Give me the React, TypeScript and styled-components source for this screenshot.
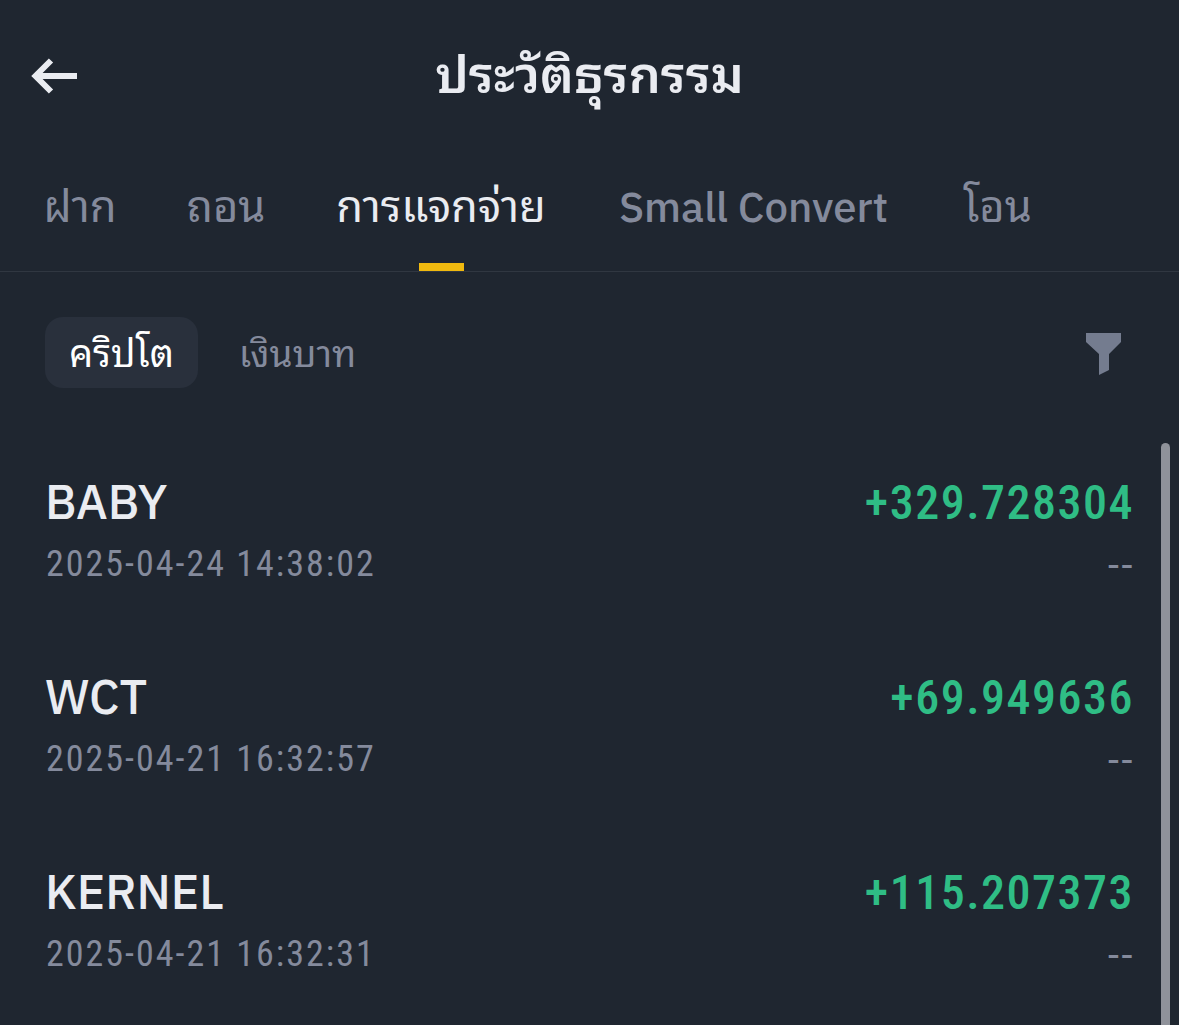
import * as React from 'react';
import styled, { createGlobalStyle } from 'styled-components';

const colors = {
  background: '#1f2630',
  panel: '#29303c',
  line: '#303741',
  text: '#eaecf1',
  white: '#ffffff',
  muted: '#848a9c',
  filter: '#747c8f',
  scroll: '#8f929a',
  green: '#2fbd85',
  yellow: '#f0b90f',
};

const GlobalStyle = createGlobalStyle`
  body {
    margin: 0;
    background: ${colors.background};
    font-family: 'IBM Plex Sans', 'Noto Sans Thai Looped', Roboto, sans-serif;
  }
`;
const Screen = styled.div`
  display: flex;
  flex-direction: column;
  height: 1025px;
  overflow: hidden;
  background: ${colors.background};
  color: ${colors.text};
`;
const Header = styled.header`
  display: grid;
  grid-template-columns: 80px 1fr 80px;
  align-items: center;
  flex: none;
  height: 152px;
`;
const BackButton = styled.button`
  display: flex;
  padding: 0 0 0 30px;
  border: 0;
  background: none;
  color: inherit;
`;
const Title = styled.h1`
  margin: 0;
  padding-bottom: 5px;
  font-size: 51px;
  line-height: 80px;
  font-weight: 600;
  text-align: center;
  white-space: nowrap;
`;
const Tabs = styled.nav`
  display: flex;
  gap: 75px;
  flex: none;
  height: 119px;
  padding-left: 45px;
  border-bottom: 1px solid ${colors.line};
`;
const Tab = styled.div<{ $active: boolean; $width: number }>`
  display: flex;
  flex-direction: column;
  align-items: center;
  justify-content: space-between;
  width: ${props => props.$width}px;
  color: ${props => props.$active ? colors.text : colors.muted};
  white-space: nowrap;

  &::after {
    content: '';
    width: 45px;
    height: 8px;
    background: ${props => props.$active ? colors.yellow : 'transparent'};
  }
`;
const TabLabel = styled.span<{ $latin?: boolean }>`
  padding-top: ${props => props.$latin ? 25 : 24}px;
  font-size: ${props => props.$latin ? 42 : 43.5}px;
  line-height: 60px;
  font-weight: ${props => props.$latin ? 500 : 400};
`;
const Toolbar = styled.div`
  display: flex;
  align-items: center;
  flex: none;
  height: 71px;
  padding: 45px 57px 55px 45px;
`;
const Currency = styled.div<{ $active: boolean }>`
  width: 153px;
  height: 71px;
  margin-right: 23px;
  border-radius: 18px;
  background: ${props => props.$active ? colors.panel : 'transparent'};
  color: ${props => props.$active ? colors.white : colors.muted};
  font-size: ${props => props.$active ? 38 : 37}px;
  line-height: 72px;
  text-align: center;
  white-space: nowrap;
`;
const FilterButton = styled.button`
  display: flex;
  margin-left: auto;
  padding: 2px 0 0;
  border: 0;
  background: none;
  color: ${colors.filter};
`;
const List = styled.main`
  position: relative;
  flex: 1;
  min-height: 0;
  padding: 29px 46px 0;
`;
const Row = styled.div`
  display: flex;
  justify-content: space-between;
  height: 195px;
`;
const Column = styled.div<{ $right?: boolean }>`
  display: flex;
  flex-direction: column;
  align-items: ${props => props.$right ? 'flex-end' : 'flex-start'};
`;
const Coin = styled.span`
  margin-left: -1px;
  font-size: 48px;
  line-height: 59px;
  font-weight: 500;
`;
const Amount = styled.span`
  color: ${colors.green};
  font-family: Roboto, sans-serif;
  font-size: 48px;
  font-stretch: 87%;
  line-height: 62px;
  font-weight: 500;
  letter-spacing: 1.5px;
  margin-right: -1px;
`;
const DateText = styled.span`
  padding-top: 3px;
  color: ${colors.muted};
  font-family: Roboto, sans-serif;
  font-size: 36px;
  font-stretch: 87%;
  line-height: 60px;
  letter-spacing: 2px;
`;
const Status = styled.span`
  color: ${colors.muted};
  font-size: 36px;
  line-height: 60px;
  letter-spacing: -1px;
`;
const Scrollbar = styled.div`
  position: absolute;
  top: 0;
  right: 9px;
  bottom: -10px;
  width: 9px;
  border-radius: 5px;
  background: ${colors.scroll};
`;

const tabs = [
  { name: 'ฝาก', width: 70 },
  { name: 'ถอน', width: 72 },
  { name: 'การแจกจ่าย', width: 208 },
  { name: 'Small Convert', width: 267, latin: true },
  { name: 'โอน', width: 71 },
];
const currencies = ['คริปโต', 'เงินบาท'];
const transactions = [
  { coin: 'BABY', amount: '+329.728304', date: '2025-04-24 14:38:02' },
  { coin: 'WCT', amount: '+69.949636', date: '2025-04-21 16:32:57' },
  { coin: 'KERNEL', amount: '+115.207373', date: '2025-04-21 16:32:31' },
];

function App() {
  return (
    <Screen>
      <GlobalStyle />
      <Header>
        <BackButton aria-label="Back">
          <svg width="48" height="38" viewBox="0 0 48 38" fill="none" stroke="currentColor" strokeWidth="6">
            <path d="M21 3.500 5.500 19 21 34.500M6 19h41" />
          </svg>
        </BackButton>
        <Title>ประวัติธุรกรรม</Title>
      </Header>
      <Tabs>
        {tabs.map((tab, index) => (
          <Tab key={tab.name} $active={index === 2} $width={tab.width}>
            <TabLabel $latin={tab.latin}>{tab.name}</TabLabel>
          </Tab>
        ))}
      </Tabs>
      <Toolbar>
        {currencies.map((currency, index) => (
          <Currency key={currency} $active={index === 0}>{currency}</Currency>
        ))}
        <FilterButton aria-label="Filter">
          <svg width="37" height="44" viewBox="0 0 37 44" fill="currentColor">
            <path d="M1 1h35v9L24 22v16l-10 5V22L1 10z" />
          </svg>
        </FilterButton>
      </Toolbar>
      <List>
        {transactions.map(item => (
          <Row key={item.coin}>
            <Column>
              <Coin>{item.coin}</Coin>
              <DateText>{item.date}</DateText>
            </Column>
            <Column $right>
              <Amount>{item.amount}</Amount>
              <Status>--</Status>
            </Column>
          </Row>
        ))}
        <Scrollbar />
      </List>
    </Screen>
  );
}

export default App;
